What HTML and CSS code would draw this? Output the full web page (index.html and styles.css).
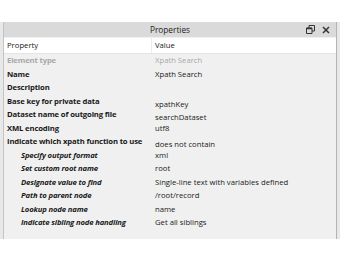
FILE: index.html
```html
<!DOCTYPE html>
<html>
<head>
<meta charset="utf-8">
<link rel="stylesheet" href="styles.css">
</head>
<body>
<div class="panel">
  <div class="inner">
    <div class="titlebar">
      <span class="title">Properties</span>
      <span class="tools">
        <svg width="9" height="9" viewBox="0 0 9 9"><path d="M3 0.5h5.5v5.5M0.5 3h5.5v5.5h-5.5z M3 0.5v2.5M8.5 6h-2.5" fill="none" stroke="#333" stroke-width="1"/><path d="M0.5 3.5h5.5" stroke="#333" stroke-width="1.5"/></svg>
        <svg width="8" height="8" viewBox="0 0 8 8"><path d="M1 1L7 7M7 1L1 7" stroke="#333" stroke-width="1.5"/></svg>
      </span>
    </div>
    <div class="header">
      <div class="hcell">Property</div>
      <div class="hcell val">Value</div>
    </div>
    <div class="body">
      <div class="row"><div class="lab dis">Element type</div><div class="val dis">Xpath Search</div></div>
      <div class="row"><div class="lab">Name</div><div class="val">Xpath Search</div></div>
      <div class="row"><div class="lab">Description</div><div class="val"></div></div>
      <div class="row"><div class="lab">Base key for private data</div><div class="val low">xpathKey</div></div>
      <div class="row"><div class="lab">Dataset name of outgoing file</div><div class="val low">searchDataset</div></div>
      <div class="row"><div class="lab">XML encoding</div><div class="val">utf8</div></div>
      <div class="row"><div class="lab">Indicate which xpath function to use</div><div class="val low">does not contain</div></div>
      <div class="row"><div class="lab sub">Specify output format</div><div class="val">xml</div></div>
      <div class="row"><div class="lab sub">Set custom root name</div><div class="val">root</div></div>
      <div class="row"><div class="lab sub">Designate value to find</div><div class="val">Single-line text with variables defined</div></div>
      <div class="row"><div class="lab sub">Path to parent node</div><div class="val">/root/record</div></div>
      <div class="row"><div class="lab sub">Lookup node name</div><div class="val">name</div></div>
      <div class="row"><div class="lab sub">Indicate sibling node handling</div><div class="val">Get all siblings</div></div>
    </div>
  </div>
</div>
</body>
</html>
```
FILE: styles.css
```css
html, body {
  margin: 0;
  padding: 0;
  background: #ffffff;
  font-family: "Open Sans", "Noto Sans", sans-serif;
  font-size: 7.7px;
  color: #1a1a1a;
}
.panel {
  margin-top: 22px;
  height: 217px;
  width: 340px;
  box-sizing: border-box;
  padding: 0 3px 0 3px;
  background: #e8e8e8;
  display: flex;
}
.inner {
  flex: 1;
  display: flex;
  flex-direction: column;
  border-left: 1px solid #c4c4c4;
  border-right: 1px solid #b4b4b4;
  background: #f0f0f0;
}
.titlebar {
  height: 15px;
  background: #dadada;
  display: flex;
  align-items: center;
  justify-content: center;
  position: relative;
  font-size: 8.3px;
  color: #222;
}
.tools {
  position: absolute;
  right: 6px;
  top: 3px;
  display: flex;
  gap: 7px;
  align-items: center;
}
.header {
  margin-top: 1px;
  height: 15px;
  background: #ffffff;
  display: grid;
  grid-template-columns: 147px 1fr;
  align-items: center;
  border-bottom: 1px solid #e4e4e4;
}
.hcell {
  padding-left: 3px;
  line-height: 15px;
}
.hcell.val {
  border-left: 1px solid #ececec;
  padding-left: 3px;
}
.body {
  display: flex;
  flex-direction: column;
}
.row {
  display: grid;
  grid-template-columns: 148px 1fr;
  height: 13.5px;
  line-height: 12px;
}
.lab {
  font-weight: 700;
  letter-spacing: -0.15px;
  padding-left: 3px;
  white-space: nowrap;
}
.lab.sub {
  font-style: italic;
  padding-left: 17px;
}
.dis {
  color: #a8a8a8;
}
.val {
  padding-left: 3px;
  white-space: nowrap;
}
.val.low {
  padding-top: 3px;
}
```
